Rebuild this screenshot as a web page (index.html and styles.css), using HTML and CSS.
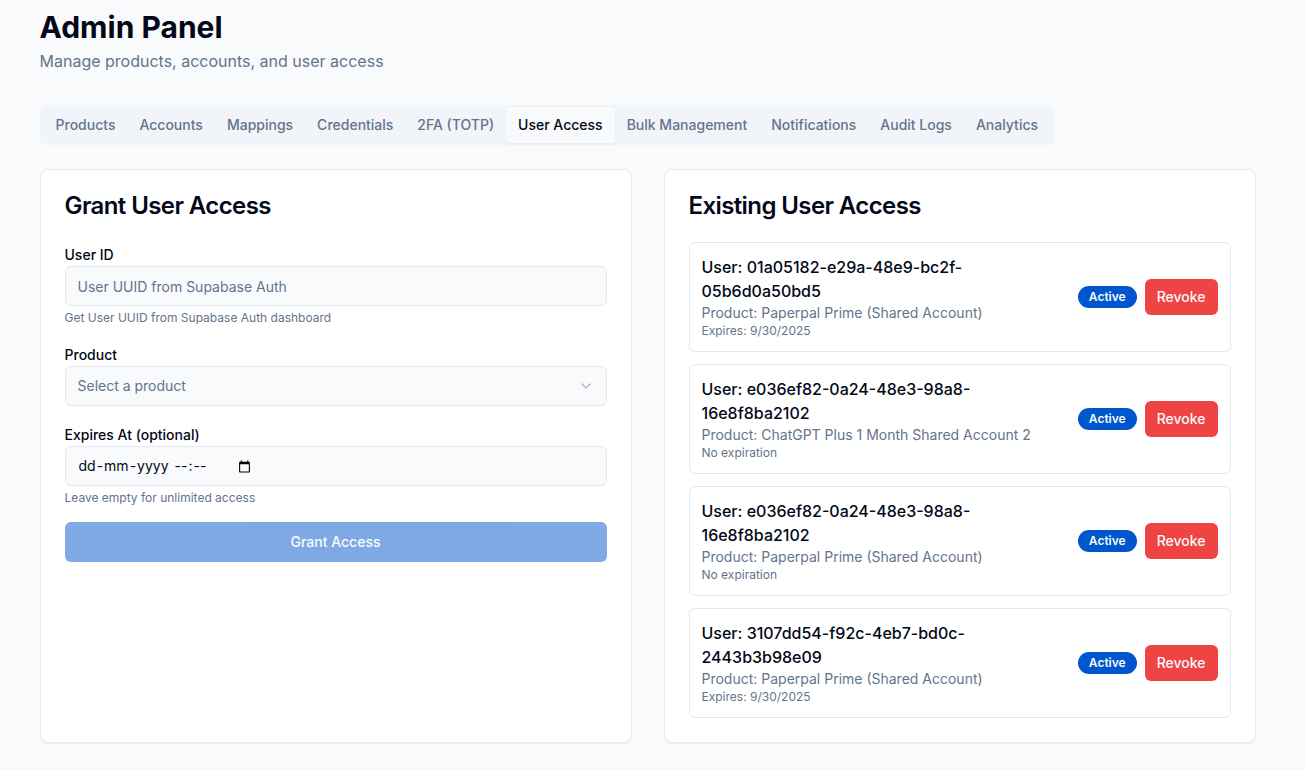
FILE: index.html
```html
<!DOCTYPE html>
<html lang="en">
<head>
<meta charset="utf-8">
<meta name="viewport" content="width=device-width, initial-scale=1">
<title>Admin Panel</title>
<link rel="stylesheet" href="styles.css">
</head>
<body>
<main class="page">
  <header class="page-header">
    <h1 class="page-title">Admin Panel</h1>
    <p class="page-subtitle">Manage products, accounts, and user access</p>
  </header>
  <div class="tabs" role="tablist">
    <button class="tab" role="tab">Products</button>
    <button class="tab" role="tab">Accounts</button>
    <button class="tab" role="tab">Mappings</button>
    <button class="tab" role="tab">Credentials</button>
    <button class="tab" role="tab">2FA (TOTP)</button>
    <button class="tab tab-active" role="tab" aria-selected="true">User Access</button>
    <button class="tab" role="tab">Bulk Management</button>
    <button class="tab" role="tab">Notifications</button>
    <button class="tab" role="tab">Audit Logs</button>
    <button class="tab" role="tab">Analytics</button>
  </div>
  <div class="columns">
    <section class="card">
      <h2 class="card-title">Grant User Access</h2>
      <form class="form">
        <div class="field">
          <label class="label" for="user-id">User ID</label>
          <input class="control" id="user-id" type="text" placeholder="User UUID from Supabase Auth">
          <p class="hint">Get User UUID from Supabase Auth dashboard</p>
        </div>
        <div class="field">
          <label class="label" for="product">Product</label>
          <div class="select-wrap">
            <select class="control select" id="product"><option>Select a product</option></select>
            <svg class="chevron" viewBox="0 0 24 24" aria-hidden="true"><path d="m6 9 6 6 6-6"/></svg>
          </div>
        </div>
        <div class="field">
          <label class="label" for="expires">Expires At (optional)</label>
          <div class="control date-control">
            <div class="date-parts">
              <input class="date-part" id="expires" type="text" placeholder="dd" aria-label="Day"><span>-</span><input class="date-part" type="text" placeholder="mm" aria-label="Month"><span>-</span><input class="date-part" type="text" placeholder="yyyy" aria-label="Year"><span class="date-space"> </span><input class="date-part" type="text" placeholder="--" aria-label="Hour"><span>:</span><input class="date-part" type="text" placeholder="--" aria-label="Minute">
            </div>
            <svg class="calendar" viewBox="0 0 24 24" aria-hidden="true"><path d="M20 3h-1V1h-2v2H7V1H5v2H4c-1.100 0-2 .9-2 2v16c0 1.100.9 2 2 2h16c1.100 0 2-.9 2-2V5c0-1.100-.9-2-2-2zm0 18H4V8h16v13z"/></svg>
          </div>
          <p class="hint">Leave empty for unlimited access</p>
        </div>
        <button class="submit" type="submit" disabled>Grant Access</button>
      </form>
    </section>
    <section class="card">
      <h2 class="card-title">Existing User Access</h2>
      <ul class="access-list">
        <li class="access">
          <div class="access-info">
            <p class="access-user">User: 01a05182-e29a-48e9-bc2f-05b6d0a50bd5</p>
            <p class="access-product">Product: Paperpal Prime (Shared Account)</p>
            <p class="access-expiry">Expires: 9/30/2025</p>
          </div>
          <div class="actions"><span class="badge">Active</span><button class="revoke">Revoke</button></div>
        </li>
        <li class="access">
          <div class="access-info">
            <p class="access-user">User: e036ef82-0a24-48e3-98a8-16e8f8ba2102</p>
            <p class="access-product">Product: ChatGPT Plus 1 Month Shared Account 2</p>
            <p class="access-expiry">No expiration</p>
          </div>
          <div class="actions"><span class="badge">Active</span><button class="revoke">Revoke</button></div>
        </li>
        <li class="access">
          <div class="access-info">
            <p class="access-user">User: e036ef82-0a24-48e3-98a8-16e8f8ba2102</p>
            <p class="access-product">Product: Paperpal Prime (Shared Account)</p>
            <p class="access-expiry">No expiration</p>
          </div>
          <div class="actions"><span class="badge">Active</span><button class="revoke">Revoke</button></div>
        </li>
        <li class="access">
          <div class="access-info">
            <p class="access-user">User: 3107dd54-f92c-4eb7-bd0c-2443b3b98e09</p>
            <p class="access-product">Product: Paperpal Prime (Shared Account)</p>
            <p class="access-expiry">Expires: 9/30/2025</p>
          </div>
          <div class="actions"><span class="badge">Active</span><button class="revoke">Revoke</button></div>
        </li>
      </ul>
    </section>
  </div>
</main>
</body>
</html>
```
FILE: styles.css
```css
* { box-sizing: border-box; }
body, h1, h2, p, ul { margin: 0; padding: 0; }
body {
  padding-right: 10px;
  background: #f9fafc;
  color: #020817;
  font-family: Inter, "Liberation Sans", sans-serif;
  font-size: 16px;
  line-height: 24px;
}
button, input, select { font: inherit; }
.page { max-width: 1280px; margin: 0 auto; padding: 9px 32px 27px; }
.page-header { margin-bottom: 32px; }
.page-title { font-size: 30px; line-height: 36px; font-weight: 700; margin-bottom: 4px; }
.page-subtitle { color: #64748b; }
.tabs {
  display: inline-flex;
  align-items: center;
  height: 40px;
  padding: 0 4px;
  border-radius: 6px;
  background: #f1f5f9;
  margin-bottom: 24px;
  vertical-align: top;
}
.tab {
  padding: 8px 12px;
  border: 0;
  border-radius: 4px;
  background: transparent;
  color: #64748b;
  font-size: 14px;
  line-height: 20px;
  font-weight: 500;
  white-space: nowrap;
}
.tab-active { background: #f9fafc; color: #020817; box-shadow: 0 1px 2px rgba(0, 0, 0, 0.05); }
.columns { display: grid; grid-template-columns: 1fr 1fr; gap: 32px; }
.card {
  min-width: 0;
  padding: 24px;
  border: 1px solid #e2e8f0;
  border-radius: 8px;
  background: #fff;
  box-shadow: 0 1px 2px rgba(0, 0, 0, 0.05);
}
.card-title { font-size: 24px; line-height: 24px; font-weight: 600; letter-spacing: -0.025em; margin-bottom: 24px; }
.form { display: flex; flex-direction: column; gap: 16px; }
.label { font-size: 14px; line-height: 20px; font-weight: 500; }
.control {
  display: block;
  width: 100%;
  height: 40px;
  padding: 8px 12px;
  border: 1px solid #e2e8f0;
  border-radius: 6px;
  background: #f9fafc;
  color: #020817;
  font-size: 14px;
  line-height: 20px;
}
.control::placeholder { color: #64748b; opacity: 1; }
.hint { margin-top: 4px; color: #64748b; font-size: 12px; line-height: 16px; }
.select-wrap { position: relative; }
.select { appearance: none; color: #64748b; }
.chevron {
  position: absolute;
  top: 12px;
  right: 13px;
  width: 16px;
  height: 16px;
  fill: none;
  stroke: #64748b;
  stroke-width: 2;
  stroke-linecap: round;
  stroke-linejoin: round;
  opacity: 0.5;
  pointer-events: none;
}
.date-control { display: flex; align-items: center; }
.date-parts { display: flex; width: 160px; }
.date-part {
  field-sizing: content;
  padding: 0 1px;
  border: 0;
  background: transparent;
  color: inherit;
}
.date-part::placeholder { color: #020817; opacity: 1; }
.date-space { white-space: pre; }
.calendar { width: 13px; height: 13px; }
.submit {
  height: 40px;
  border: 0;
  border-radius: 6px;
  background: #0056cc;
  color: #f8fafc;
  font-size: 14px;
  font-weight: 500;
  opacity: 0.5;
}
.access-list { display: flex; flex-direction: column; gap: 12px; list-style: none; }
.access {
  display: flex;
  align-items: center;
  justify-content: space-between;
  padding: 12px;
  border: 1px solid #e2e8f0;
  border-radius: 6px;
}
.access-user { font-weight: 500; max-width: 300px; }
.access-product { color: #64748b; font-size: 14px; line-height: 20px; }
.access-expiry { color: #64748b; font-size: 12px; line-height: 16px; }
.actions { display: flex; align-items: center; gap: 8px; }
.badge {
  padding: 3px 11px;
  border-radius: 11px;
  background: #0056cc;
  color: #f8fafc;
  font-size: 12px;
  line-height: 16px;
  font-weight: 600;
}
.revoke {
  height: 36px;
  padding: 0 12px;
  border: 0;
  border-radius: 6px;
  background: #ef4444;
  color: #f8fafc;
  font-size: 14px;
  font-weight: 500;
}
```
